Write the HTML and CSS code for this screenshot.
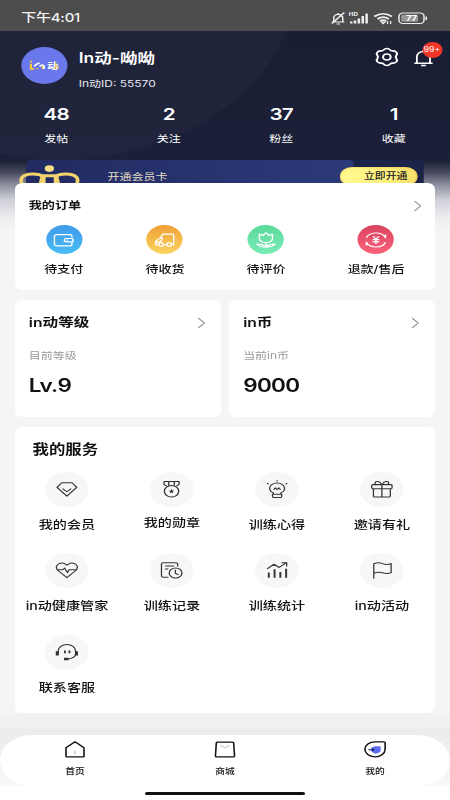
FILE: index.html
```html
<!DOCTYPE html>
<html lang="zh-CN">
<head>
<meta charset="utf-8">
<title>我的</title>
<link rel="stylesheet" href="styles.css">
</head>
<body>
<div class="screen">
  <div class="statusbar">
    <span class="clock">下午4:01</span>
    <svg class="status-icons" viewBox="0 0 78 14" fill="none" stroke="#eee" stroke-width="1.2">
      <path d="M1.500 11h10M3 11V7a3.600 3.600 0 0 1 7.200 0v4M6.500 3V2M5.300 13h2.600M1.500 12.500L11.500 1.500"/>
      <text x="15" y="5" font-size="5" font-weight="700" fill="#eee" stroke="none">HD</text>
      <path stroke-width="2" d="M17 12.500v-2M20 12.500v-3M23.100 12.500v-5M26.200 12.500v-7.500M29.300 12.500v-10"/>
      <path stroke-width="1.700" d="M35.500 5.500q7-5.500 14 0M38 8q4.500-3.600 9 0M40 10.200q2.500-2 5 0"/>
      <path d="M41 11l1.500 1.800L44 11zM46 10v3M48.500 10v3" stroke-width="1"/>
      <rect x="55.200" y="2" width="20" height="10.500" rx="3.200"/>
      <rect x="57" y="3.800" width="13.500" height="7" rx="1.500" fill="#999" stroke="none"/>
      <path d="M77 5.500v3.500"/>
      <text x="65.200" y="10" font-size="7.500" font-weight="700" fill="#fff" stroke="none" text-anchor="middle">77</text>
    </svg>
  </div>

  <header class="hero">
    <div class="profile">
      <div class="avatar"><svg viewBox="0 0 30 14"><path d="M2 1.500v2M2 5v6h3M8 10v1M13 7v4" stroke="#f5c542" stroke-width="2" fill="none"/><path d="M5 8q1.500-3 5-4M10 8q3-3 4 0v3" stroke="#fff" stroke-width="1.800" fill="none"/><text x="17" y="11" font-size="10" font-weight="700" fill="#fff">动</text><path d="M25 3.500v3M27 7v4M23.500 11l2-4" stroke="#f5c542" stroke-width="1.200"/></svg></div>
      <div class="who">
        <div class="name">In动-呦呦</div>
        <div class="uid">In动ID: 55570</div>
      </div>
      <svg class="gear" viewBox="0 0 20 20" fill="none" stroke="#fff" stroke-width="1.700"><path stroke-linejoin="round" d="M7.300 2.500Q8.200 1 10 1t2.700 1.500q.8 1.200 2.300 1.100 2-.2 3.100 1.500 1 1.700-.1 3.200-.9 1.700 0 3.400 1.100 1.500.1 3.200-1.100 1.700-3.100 1.500-1.500-.1-2.300 1.100Q11.800 19 10 19t-2.700-1.500q-.8-1.200-2.300-1.100-2 .2-3.100-1.500-1-1.700.1-3.200.9-1.700 0-3.400-1.100-1.500-.1-3.200 1.100-1.700 3.100-1.500 1.500.1 2.300-1.100z"/><circle cx="10" cy="10" r="3.200"/></svg>
      <div class="bell">
        <svg viewBox="0 0 18 20" fill="none" stroke="#fff" stroke-width="1.700"><path d="M.5 16h17M2.900 16V8.500a6.100 6.100 0 0 1 12.200 0V16M9 2.500V.8M6.800 18.800h4.400"/></svg>
        <span class="badge">99+</span>
      </div>
    </div>
    <div class="stats">
      <div><b>48</b><span>发帖</span></div>
      <div><b>2</b><span>关注</span></div>
      <div><b>37</b><span>粉丝</span></div>
      <div><b>1</b><span>收藏</span></div>
    </div>
    <div class="vip">
      <div class="vip-main">开通会员卡</div>
      <div class="vip-btn">立即开通</div>
      <svg class="crown" viewBox="0 0 50 20" fill="none" stroke="#f3d36b" stroke-width="3"><ellipse cx="24.500" cy="3.600" rx="3.700" ry="3.300" fill="#f8df85" stroke="none"/><path d="M2.500 19Q0 11 8 9.200q7-1 11 1.500l-2 10M46.500 19q2.500-8-5.500-9.800-7-1-11 1.500l2 10M17 10.700h15M20 11.500v9M29.500 11.500v9"/></svg>
    </div>
  </header>

  <main class="content">
    <section class="card orders">
      <div class="row"><h2>我的订单</h2><svg class="arrow" viewBox="0 0 7 12"><path d="M.7.700L6 6 .7 11.300"/></svg></div>
      <div class="order-list">
        <div><i class="blue"><svg viewBox="0 0 20 20"><path d="M17.500 7V5.200a1.200 1.200 0 0 0-1.200-1.200H3.700A1.700 1.700 0 0 0 2 5.700v9.100A1.700 1.700 0 0 0 3.700 16.500h12.600a1.200 1.200 0 0 0 1.200-1.200V13M18.500 8.300h-5.800a1.800 1.800 0 0 0 0 3.700h5.800zM13 10.200h1"/></svg></i>待支付</div>
        <div><i class="orange"><svg viewBox="0 0 20 20"><path d="M4.200 15.500H2V11.500L5.500 8M2.500 12H6l2-3M8.500 8H5.800L8.500 3.500H17a1 1 0 0 1 1 1v11h-1.500M9.500 15.500h2"/><circle cx="6.800" cy="15" r="2"/><circle cx="14" cy="15" r="2"/></svg></i>待收货</div>
        <div><i class="green"><svg viewBox="0 0 20 20"><path d="M4.200 3.500L7.300 5 10 2l2.700 3 3.100-1.500v4.700a5.800 5 0 0 1-11.600 0zM10 13.200V18M10 17.800Q8 14.500 2 14.500 4 18 10 18t8-3.500q-6 0-8 3.300"/></svg></i>待评价</div>
        <div><i class="red"><svg viewBox="0 0 20 20"><path d="M1.500 7.500C4 1 15 0 18.500 7.500M18.500 4v4M18.500 12.500C16 19 5 20 1.500 12.500M1.500 16v-4M7.500 6L10 9l2.500-3M10 9v5.500M7 9.500h6M7 12h6"/></svg></i>退款/售后</div>
      </div>
    </section>

    <div class="pair">
      <section class="card asset">
        <div class="row"><h2>in动等级</h2><svg class="arrow" viewBox="0 0 7 12"><path d="M.7.700L6 6 .7 11.300"/></svg></div>
        <p>目前等级</p><strong>Lv.9</strong>
      </section>
      <section class="card asset">
        <div class="row"><h2>in币</h2><svg class="arrow" viewBox="0 0 7 12"><path d="M.7.700L6 6 .7 11.300"/></svg></div>
        <p>当前in币</p><strong>9000</strong>
      </section>
    </div>

    <section class="card services">
      <h2>我的服务</h2>
      <div class="grid">
        <div><i><svg viewBox="0 0 20 20"><path d="M5.500 3h9l4 5L10 17.500 1.500 8zM6.300 9.200l3.700 3.500 3.700-3.500"/></svg></i>我的会员</div>
        <div class="raised"><i><svg viewBox="0 0 20 20"><circle cx="9.700" cy="12.200" r="6.200"/><path d="M3.200 1.500h13v3.500l-2.500 1.700M5.700 6.700L3.200 5V1.500M7.300 1.500v4.700M12.100 1.500v4.700"/><path class="fill" d="M9.700 9.800l.7 1.500 1.600.2-1.200 1.100.3 1.600-1.400-.8-1.400.8.3-1.600-1.200-1.100 1.600-.2z"/></svg></i>我的勋章</div>
        <div><i><svg viewBox="0 0 20 20"><path d="M7 15.500V14Q3.700 12.300 3.700 9a6.500 5.700 0 0 1 13 0q0 3.300-3.300 5v1.500M6.200 15.500h8v2q0 1.500-1.500 1.500h-5q-1.500 0-1.500-1.500zM7.200 10.500l1.500-2 1.500 2 1.500-2 1.500 2M10.200 .2v1.500M1.500 3.500l1.500 1M19 3.500l-1.500 1"/></svg></i>训练心得</div>
        <div><i><svg viewBox="0 0 20 20"><path d="M2.700 9.500v8a1 1 0 0 0 1 1h12.600a1 1 0 0 0 1-1v-8M2.200 5h15.600a1 1 0 0 1 1 1v2.500a1 1 0 0 1-1 1H2.200a1 1 0 0 1-1-1V6a1 1 0 0 1 1-1zM10 5v13.500M10 5Q8 1 5.500 1.700 3 2.500 5 5M10 5q2-4 4.500-3.300Q17 2.500 15 5"/></svg></i>邀请有礼</div>
        <div><i><svg viewBox="0 0 20 20"><path d="M10 18L2 10C-1 5.500 3 1 7.500 2.500L10 4.500 12.500 2.500c4.500-1.500 8.500 3 5.500 7.500zM1.500 9.500h5l1.500-2 2.500 5 1.500-3h6.500"/></svg></i>in动健康管家</div>
        <div><i><svg viewBox="0 0 20 20"><path d="M7 17.500H2.500A1.500 1.500 0 0 1 1 16V3.500A1.500 1.500 0 0 1 2.500 2h11A1.500 1.500 0 0 1 15 3.500v2.500M4 5.500h8M4 8.700h3"/><circle cx="13.200" cy="13" r="5.500"/><path d="M13 9.500v3.800l2.800 1.700"/></svg></i>训练记录</div>
        <div><i><svg viewBox="0 0 20 20"><path d="M1.500 8.500L7.500 3.500l4.500 3.500 6-5M14 2h4.500v4"/><path stroke-width="1.700" d="M3 18V12.500M8 18V9M13 18V12M18 18V8.500"/></svg></i>训练统计</div>
        <div><i><svg viewBox="0 0 20 20"><path d="M3 19V3Q7 1 10.500 2.800t7.500 0v10q-4 1.500-7.500 0t-7.500.5"/></svg></i>in动活动</div>
        <div><i><svg viewBox="0 0 20 20"><path d="M2.500 12V8.500a7.500 7 0 0 1 15 0V12q0 4-6 5.300"/><path stroke-width="2.600" d="M1.700 9v4.500M18.300 9v4.500M7.500 17.300h4"/><path stroke-width="1.600" d="M8.300 8v3.200M12.200 8v3.200"/></svg></i>联系客服</div>
      </div>
    </section>
  </main>

  <footer class="dock">
    <nav class="tabs">
      <div><svg viewBox="0 0 20 20"><path d="M2 8L10 1.500 18 8v9.500a.8.800 0 0 1-.8.800H2.800a.8.800 0 0 1-.8-.8z"/><path class="soft" d="M10 11v4.500"/></svg>首页</div>
      <div><svg viewBox="0 0 20 20"><path d="M3.500 1.800h13.200a1 1 0 0 1 1 1l.8 14.500a1 1 0 0 1-1 1H2.500a1 1 0 0 1-1-1l.8-14.500a1 1 0 0 1 1.200-1z"/><path class="soft" d="M6 5q4 6 8 0"/></svg>商城</div>
      <div><svg viewBox="0 0 20 20"><path d="M10 1.500h8q1 0 1 1v7.500a9 8.300 0 1 1-9-8.500z"/><path fill="#5c6cf2" stroke="none" d="M10 6.500h5v5.500q-2 3-5 2.500-2.500-.5-4.500-4.500Q7 7 10 6.500z"/><circle cx="8.200" cy="10.300" r="1.100" fill="#111" stroke="none"/><circle cx="5" cy="10.300" r=".8" fill="#111" stroke="none"/></svg>我的</div>
    </nav>
    <div class="home-bar"></div>
  </footer>
</div>
</body>
</html>
```

FILE: styles.css
```css
* { box-sizing: border-box; margin: 0; padding: 0; }
body { width: 450px; height: 800px; overflow: hidden; background: #f5f5f5; }

/* The whole interface is set on a 360px grid and widened to the 450px window. */
.screen {
  width: 360px; height: 800px; display: flex; flex-direction: column;
  transform: scaleX(1.25); transform-origin: 0 0;
  font-family: Inter, "Noto Sans CJK SC", sans-serif; color: #111;
  white-space: nowrap;
}
svg { display: block; }
h2 { font-weight: 600; }

.statusbar {
  height: 31px; background: #4d4d4d; color: #f2f2f2;
  display: flex; justify-content: space-between; align-items: center;
  padding: 4px 18.500px 0 17px;
}
.clock { font-size: 12px; line-height: 18px; font-weight: 500; letter-spacing: -.200px; }
.status-icons { width: 78px; height: 14px; }

.hero {
  height: 199px; margin-bottom: -47px; color: #fff;
  background:
    radial-gradient(ellipse 192px 189px at 48px -60px, rgba(255,255,255,.025) 99.500%, transparent 100%),
    linear-gradient(180deg, #1a1e34 0, #1b2038 126px, #1f2339 131px, #45485d 141px, #9294a4 155px, #cfd0d8 169px, #ededf0 186px, #f5f5f5 199px);
}
.profile { height: 69px; display: flex; align-items: flex-start; padding: 16px 12px 0 17px; }
.avatar {
  width: 37px; height: 37px; border-radius: 50%; background: #6b78ec;
  display: flex; align-items: center; justify-content: center;
}
.avatar svg { width: 26px; height: 13px; }
.who { margin-left: 9px; flex: 1; }
.name { font-size: 14px; line-height: 20px; font-weight: 600; margin-top: 1px; }
.uid { font-size: 9.600px; line-height: 14px; margin-top: 9px; color: #e8e8ee; }
.gear { width: 19px; height: 20px; flex: none; }
.bell { width: 17px; margin-left: 12.500px; margin-right: 0; position: relative; flex: none; }
.bell svg { width: 15.500px; height: 20px; margin-top: 1px; }
.badge {
  position: absolute; left: 6.500px; top: -5px; width: 16px; height: 16px;
  border-radius: 50%; background: #f03428; font-size: 7px; line-height: 16px; text-align: center;
}
.stats { height: 60px; display: grid; grid-template-columns: repeat(4, 1fr); text-align: center; padding-top: 4px; }
.stats b { display: block; font-size: 16.500px; line-height: 20px; font-weight: 600; letter-spacing: -.600px; }
.stats span { display: block; font-size: 9.600px; line-height: 14px; margin-top: 8px; }

.vip {
  margin: 0 21px; height: 24px; position: relative; background: #1b2349; border-radius: 4px 4px 0 0;
  display: flex; justify-content: space-between;
}
.vip-main {
  width: 262px; padding-left: 65px; background: linear-gradient(90deg, #222b61, #2c3a7a);
  border-radius: 4px 4px 0 0; font-size: 9.600px; line-height: 33px; color: #e3dfc8;
}
.vip-btn {
  position: absolute; right: 5.500px; top: 7px; width: 62px; height: 19px; padding-left: 12px;
  border-radius: 9.500px; background: linear-gradient(90deg, #fffa90, #fdf080 60%, #f6df68);
  box-shadow: inset 0 0 2px #e0a93c; color: #222; font-size: 8.700px; line-height: 19px; font-weight: 500; text-align: center;
}
.crown { position: absolute; left: -6.500px; top: 5px; width: 50px; height: 20px; }

.content { padding: 0 11.600px; position: relative; flex: 1; }
.card { background: #fff; border-radius: 6px; }
.row { display: flex; justify-content: space-between; align-items: center; }
.arrow { width: 6.500px; height: 12px; fill: none; stroke: #888; stroke-width: 1; }

.orders { height: 107px; padding: 15px 11.400px 0; }
.orders h2 { font-size: 10.500px; line-height: 16px; }
.order-list {
  display: flex; justify-content: space-between; padding: 11px 13.500px 0 12.500px;
  font-size: 10.400px; line-height: 16px; font-weight: 500;
}
.order-list div { display: flex; flex-direction: column; align-items: center; gap: 8px; }
.order-list i { width: 29px; height: 29px; border-radius: 50%; display: flex; align-items: center; justify-content: center; }
.order-list svg { width: 19.500px; height: 18px; fill: none; stroke: #fff; stroke-width: 1.300; stroke-linejoin: round; }
.blue { background: linear-gradient(#3f9ae8, #49bcf4); }
.orange { background: linear-gradient(#f0a035, #fad460); }
.green { background: linear-gradient(#5cda9c, #78ebb4); }
.red { background: linear-gradient(#d84360, #fb6379); }

.pair { display: grid; grid-template-columns: 1fr 1fr; gap: 6px; margin: 10px 0; }
.asset { height: 117px; padding: 13px 13px 0 11.500px; }
.asset h2 { font-size: 12.500px; line-height: 20px; }
.asset p { font-size: 9.600px; line-height: 14px; color: #999; margin-top: 16px; }
.asset strong { display: block; font-size: 18px; line-height: 24px; font-weight: 600; margin-top: 11px; letter-spacing: -.500px; }

.services { height: 286px; padding-top: 12px; }
.services h2 { font-size: 13.100px; line-height: 20px; padding-left: 14.500px; }
.grid { display: grid; grid-template-columns: repeat(4, 84px); grid-auto-rows: 81.700px; padding-top: 12.500px; }
.grid div { display: flex; flex-direction: column; align-items: center; gap: 10px; font-size: 11.300px; line-height: 16px; font-weight: 500; }
.grid .raised { gap: 8.500px; }
.grid i { width: 35px; height: 35px; border-radius: 50%; background: #f7f7f7; display: flex; align-items: center; justify-content: center; }
.grid svg { width: 19px; height: 18.500px; fill: none; stroke: #333; stroke-width: 1.100; stroke-linejoin: round; }
.grid .fill { fill: #333; stroke: none; }

.dock { height: 87px; background: linear-gradient(#f3f3f3, #ececec 22px, #f8f8f8 73px, #fff 73px); padding-top: 22px; position: relative; }
.tabs {
  height: 51px; background: #fff; border-radius: 26px; padding-top: 5px;
  display: grid; grid-template-columns: repeat(3, 1fr); font-size: 7.800px; line-height: 12px; font-weight: 500;
}
.tabs div { display: flex; flex-direction: column; align-items: center; gap: 6px; }
.tabs svg { width: 18px; height: 19px; fill: none; stroke: #111; stroke-width: 1.400; stroke-linejoin: round; }
.tabs .soft { stroke: #c9cbd6; }
.home-bar { width: 128.500px; height: 3px; margin: 5.500px auto 0; border-radius: 2px; background: #111; }
```
